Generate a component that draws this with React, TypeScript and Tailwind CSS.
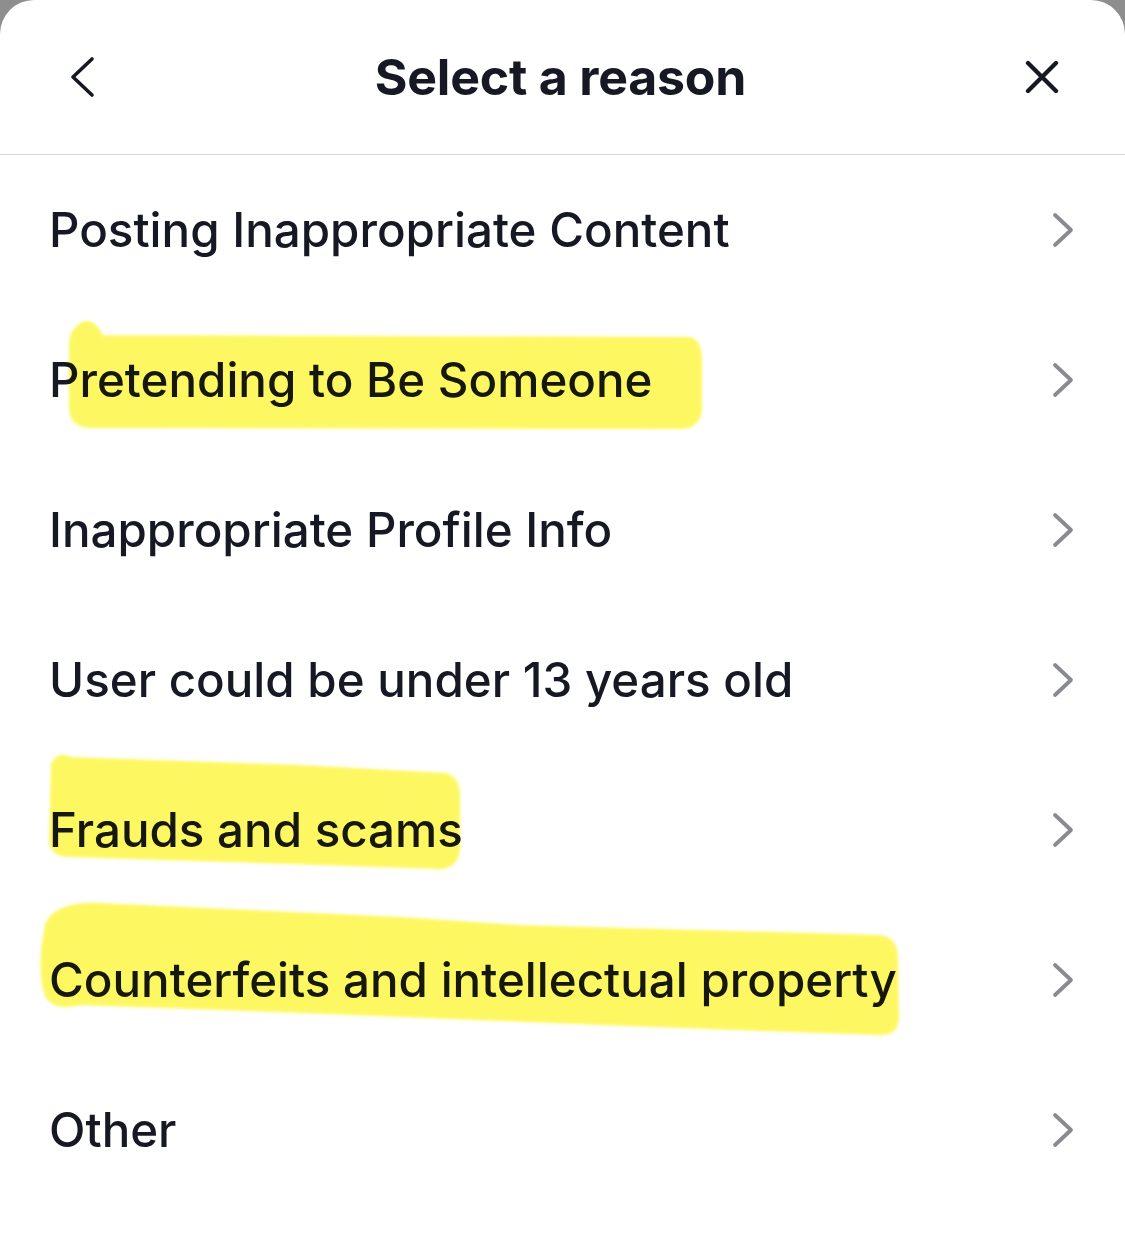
const reasons = [
  'Posting Inappropriate Content',
  'Pretending to Be Someone',
  'Inappropriate Profile Info',
  'User could be under 13 years old',
  'Frauds and scams',
  'Counterfeits and intellectual property',
  'Other',
];

function Highlights() {
  return (
    <svg
      className="pointer-events-none absolute left-0 top-0 h-full w-full mix-blend-multiply"
      viewBox="0 0 1125 1247"
      preserveAspectRatio="none"
    >
      <defs>
        <filter id="soft">
          <feGaussianBlur stdDeviation="1.5" />
        </filter>
      </defs>
      <g fill="#fdf862" stroke="#fdf862" strokeWidth="10" strokeLinejoin="round" filter="url(#soft)">
        <path d="M80 330 Q86 322 94 330 L100 340 L690 342 Q697 345 697 360 L697 410 Q695 424 680 424 L90 423 Q74 422 74 408 L74 345 Q74 334 80 330 Z" />
        <path d="M56 765 Q60 757 70 762 L300 770 L446 778 Q455 782 455 795 L455 850 Q452 866 436 864 L260 858 L70 852 Q54 852 54 840 Z" />
        <path d="M50 925 Q60 906 100 908 L400 922 L520 930 L880 940 Q893 942 893 958 L894 1020 Q892 1032 875 1030 L600 1020 L300 1008 L80 1000 Q58 1006 50 995 Q44 980 46 950 Z" />
      </g>
    </svg>
  );
}

export default function App() {
  return (
    <div className="h-[1247px] w-[1125px] bg-[#8e8e8e]" style={{ fontFamily: 'Inter, "Noto Sans", sans-serif' }}>
      <div className="relative h-full w-full overflow-hidden rounded-t-[34px] bg-white">
        <div className="flex h-[155px] items-center justify-between border-b border-[#d6d6d8] pl-[68px] pr-[66px]">
          <svg width="28" height="44" viewBox="0 0 28 44" className="text-[#161823]">
            <path d="M24 4 L5 22 L24 40" fill="none" stroke="currentColor" strokeWidth="3.6" strokeLinecap="round" strokeLinejoin="round" />
          </svg>
          <h1 className="text-[50px] font-bold tracking-[-0.2px] text-[#161823]">Select a reason</h1>
          <svg width="34" height="34" viewBox="0 0 34 34" className="text-[#161823]">
            <path d="M3 3 L31 31 M31 3 L3 31" fill="none" stroke="currentColor" strokeWidth="4.3" strokeLinecap="round" />
          </svg>
        </div>
        <ul>
          {reasons.map((r) => (
            <li key={r} className="flex h-[150px] items-center justify-between pl-[49px] pr-[50px]">
              <span className="text-[47.5px] font-medium leading-none text-[#161823]">{r}</span>
              <svg width="24" height="36" viewBox="0 0 24 36" className="text-[#8a8b91]">
                <path d="M4 3 L20 18 L4 33" fill="none" stroke="currentColor" strokeWidth="3.8" strokeLinecap="round" strokeLinejoin="round" />
              </svg>
            </li>
          ))}
        </ul>
        <Highlights />
      </div>
    </div>
  );
}
